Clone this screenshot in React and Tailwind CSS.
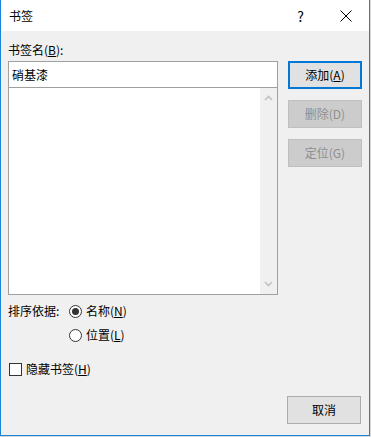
import React from 'react'

const font = { fontFamily: '"Noto Sans CJK SC", "Noto Sans", sans-serif' }

function Btn({ children, primary, disabled }) {
  const cls = primary
    ? 'border-2 border-[#0078d7] bg-[#e1e1e1] text-black'
    : disabled
    ? 'border border-[#bfbfbf] bg-[#cccccc] text-[#8f8f8f]'
    : 'border border-[#adadad] bg-[#e1e1e1] text-black'
  return (
    <div className={`w-[74px] h-[28px] flex items-center justify-center text-[12px] ${cls}`}>
      {children}
    </div>
  )
}

export default function App() {
  return (
    <div className="w-[371px] h-[437px] bg-[#d8d8d8] overflow-hidden" style={font}>
      <div className="w-[370px] h-[436px] flex flex-col border-l border-r border-b border-[#1883d7] bg-[#f0f0f0] text-black text-[12px] leading-none">
        {/* title bar */}
        <div className="h-[31px] bg-white flex items-center pl-[8px] shrink-0">
          <span className="text-[12px]">书签</span>
          <span className="ml-auto mr-[36px] text-[14px]">?</span>
          <svg width="12" height="12" viewBox="0 0 12 12" className="mr-[17px]">
            <path d="M0.5 0.5 L11.5 11.5 M11.5 0.5 L0.5 11.5" stroke="#000" strokeWidth="1" />
          </svg>
        </div>

        <div className="flex-1 flex flex-col px-[7px] pt-[12px]">
          <div className="h-[14px] flex items-center">
            书签名(<span className="underline">B</span>):
          </div>
          <div className="flex mt-[4px] gap-[10px]">
            <div className="w-[271px] flex flex-col">
              <div className="h-[27px] border border-[#a0a0a0] bg-white flex items-center pl-[3px]">
                硝基漆
              </div>
              <div className="h-[207px] border border-t-0 border-[#a0a0a0] bg-white flex justify-end">
                <div className="w-[17px] bg-[#f0f0f0] flex flex-col items-center justify-between py-[7px]">
                  <svg width="9" height="6" viewBox="0 0 9 6">
                    <path d="M1 5 L4.5 1.5 L8 5" stroke="#c2c2c2" strokeWidth="1.6" fill="none" />
                  </svg>
                  <svg width="9" height="6" viewBox="0 0 9 6">
                    <path d="M1 1 L4.5 4.5 L8 1" stroke="#c2c2c2" strokeWidth="1.6" fill="none" />
                  </svg>
                </div>
              </div>
            </div>
            <div className="flex flex-col gap-[11px]">
              <Btn primary>
                添加(<span className="underline">A</span>)
              </Btn>
              <Btn disabled>删除(D)</Btn>
              <Btn disabled>定位(G)</Btn>
            </div>
          </div>

          <div className="flex mt-[8px]">
            <div className="w-[61px] h-[16px] flex items-center">排序依据:</div>
            <div className="flex flex-col gap-[8px]">
              <div className="flex items-center h-[16px]">
                <div className="w-[13px] h-[13px] rounded-full border border-[#333] bg-white flex items-center justify-center">
                  <div className="w-[7px] h-[7px] rounded-full bg-[#333]" />
                </div>
                <span className="ml-[4px]">
                  名称(<span className="underline">N</span>)
                </span>
              </div>
              <div className="flex items-center h-[16px]">
                <div className="w-[13px] h-[13px] rounded-full border border-[#333] bg-white" />
                <span className="ml-[4px]">
                  位置(<span className="underline">L</span>)
                </span>
              </div>
            </div>
          </div>

          <div className="flex items-center h-[16px] mt-[18px] pl-[1px]">
            <div className="w-[13px] h-[13px] border border-[#333] bg-white" />
            <span className="ml-[4px]">
              隐藏书签(<span className="underline">H</span>)
            </span>
          </div>

          <div className="flex justify-end mt-[19px] pr-[1px]">
            <Btn>取消</Btn>
          </div>
        </div>
      </div>
    </div>
  )
}
